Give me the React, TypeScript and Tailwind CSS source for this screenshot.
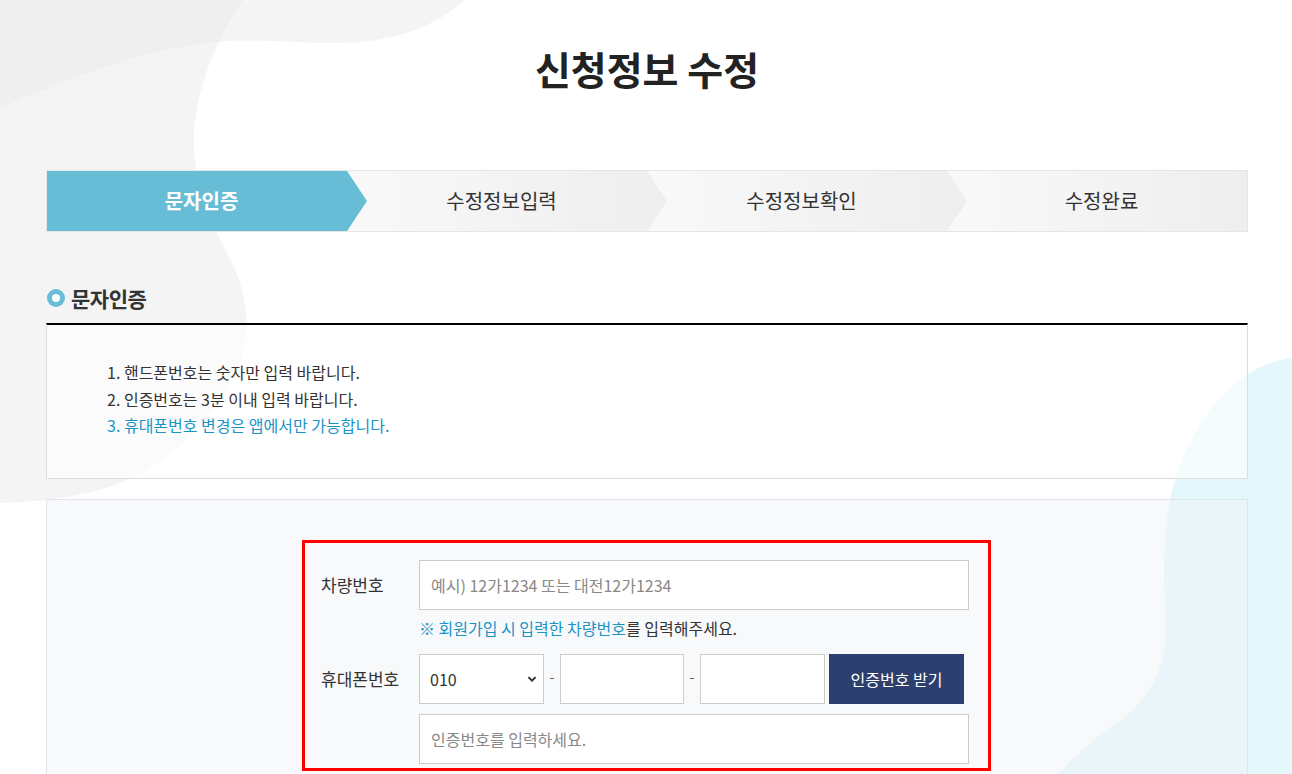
import React from "react";

const font = { fontFamily: '"Noto Sans CJK KR", "Noto Sans", sans-serif' };

function Background() {
  return (
    <svg
      className="absolute inset-0 w-[1292px] h-[774px] pointer-events-none"
      width="1292"
      height="774"
      viewBox="0 0 1292 774"
      aria-hidden="true"
    >
      <defs>
        <clipPath id="clipB">
          <path d="M0,0 L243,0 C225,28 213,50 204,80 C196,105 193,130 194,150 C196,190 215,230 235,270 C248,300 250,330 240,360 C225,410 170,470 100,490 C60,500 30,502 0,503 Z" />
        </clipPath>
      </defs>
      <path
        fill="#f4f4f4"
        d="M0,0 L243,0 C225,28 213,50 204,80 C196,105 193,130 194,150 C196,190 215,230 235,270 C248,300 250,330 240,360 C225,410 170,470 100,490 C60,500 30,502 0,503 Z"
      />
      <path
        fill="#f4f4f4"
        d="M0,0 L465,0 C430,30 390,43 333,43 C290,43 260,38 215,42 C140,50 70,78 0,108 Z"
      />
      <path
        fill="#efefef"
        clipPath="url(#clipB)"
        d="M0,0 L465,0 C430,30 390,43 333,43 C290,43 260,38 215,42 C140,50 70,78 0,108 Z"
      />
      <path
        fill="#e4f7fa"
        d="M1292,358 C1230,365 1185,430 1170,500 C1160,550 1166,600 1165,640 C1162,690 1130,715 1100,735 C1085,748 1070,760 1058,774 L1292,774 Z"
      />
    </svg>
  );
}

function Steps() {
  const steps = ["문자인증", "수정정보입력", "수정정보확인", "수정완료"];
  return (
    <div className="flex h-[62px] border border-[#e6e6e6]">
      {steps.map((s, i) => {
        const last = i === steps.length - 1;
        const active = i === 0;
        const z = ["z-40", "z-30", "z-20", "z-10"][i];
        return (
          <div
            key={s}
            className={
              (last
                ? "w-[300px] "
                : "w-[320px] -mr-[20px] [clip-path:polygon(0_0,300px_0,320px_50%,300px_100%,0_100%)] ") +
              "relative h-full shrink-0 " +
              z +
              " " +
              (active
                ? "bg-[#67bcd6]"
                : "bg-linear-to-r from-[#f9f9f9] to-[#eeeeee]")
            }
          >
            <div
              className={
                "w-[300px] h-full flex items-center justify-center pl-[9px] text-[20px] " +
                (active ? "text-white font-bold" : "text-[#333]")
              }
            >
              {s}
            </div>
          </div>
        );
      })}
    </div>
  );
}

function Chevron() {
  return (
    <svg
      className="absolute right-[7px] top-1/2 -translate-y-1/2"
      width="10"
      height="7"
      viewBox="0 0 10 7"
    >
      <path d="M1.4 1.6 L5 5.1 L8.6 1.6" fill="none" stroke="#333" strokeWidth="2" />
    </svg>
  );
}

export default function App() {
  return (
    <div className="relative h-[774px] w-full overflow-hidden bg-white" style={font}>
      <Background />
      <div className="relative ml-[46px] w-[1202px]">
        <h1 className="pt-[40px] h-[96px] leading-[56px] text-center text-[39px] font-bold text-[#222]">
          신청정보 수정
        </h1>
        <div className="mt-[74px]">
          <Steps />
        </div>

        <div className="mt-[54px] flex items-center h-[24px] pl-[1px]">
          <span className="inline-block w-[18px] h-[18px] rounded-full border-[5px] border-[#67bcd6] bg-white" />
          <span className="ml-[6px] text-[21px] font-bold text-[#333] tracking-[-0.5px] leading-[24px]">
            문자인증
          </span>
        </div>

        <div className="mt-[13px] border-t-2 border-t-black border-x border-b border-x-[#dddddd] border-b-[#dddddd] bg-white/60 pt-[34px] pb-[39px] pl-[60px] text-[16px] leading-[26.5px] text-[#333]">
          <p>1. 핸드폰번호는 숫자만 입력 바랍니다.</p>
          <p>2. 인증번호는 3분 이내 입력 바랍니다.</p>
          <p className="text-[#1a93c6]">3. 휴대폰번호 변경은 앱에서만 가능합니다.</p>
        </div>

        <div className="mt-[20px] border border-[#dfe5ea] bg-[#f0f4f8]/50 pt-[40px] h-[320px]">
          <div className="ml-[255px] w-[689px] border-[3px] border-[#ff0000] pt-[17px] pl-[16px] pr-[18px] pb-[4px]">
            <div className="flex items-center">
              <div className="w-[98px] text-[17px] text-[#333]">차량번호</div>
              <input
                className="w-[550px] h-[50px] border border-[#cccccc] bg-white px-[11px] text-[16px] text-[#333] placeholder:text-[#888] outline-none"
                placeholder="예시) 12가1234 또는 대전12가1234"
              />
            </div>
            <div className="ml-[98px] mt-[8px] leading-[20px] text-[16px] text-[#333]">
              <span className="text-[#1a93c6]">※ 회원가입 시 입력한 차량번호</span>를 입력해주세요.
            </div>
            <div className="flex items-center mt-[16px]">
              <div className="w-[98px] text-[17px] text-[#333]">휴대폰번호</div>
              <div className="relative w-[125px] h-[50px]">
                <select className="appearance-none w-full h-full border border-[#cccccc] bg-white pl-[10px] text-[16px] text-[#333] outline-none">
                  <option>010</option>
                </select>
                <Chevron />
              </div>
              <span className="w-[16px] text-center text-[14px] text-[#555] -mt-[4px]">-</span>
              <input className="w-[124px] h-[50px] border border-[#cccccc] bg-white outline-none" />
              <span className="w-[16px] text-center text-[14px] text-[#555] -mt-[4px]">-</span>
              <input className="w-[125px] h-[50px] border border-[#cccccc] bg-white outline-none" />
              <button className="ml-[4px] w-[135px] h-[50px] bg-[#2c3f6e] text-white text-[16px]">
                인증번호 받기
              </button>
            </div>
            <div className="flex mt-[10px]">
              <div className="w-[98px]" />
              <input
                className="w-[550px] h-[50px] border border-[#cccccc] bg-white px-[11px] text-[16px] text-[#333] placeholder:text-[#888] outline-none"
                placeholder="인증번호를 입력하세요."
              />
            </div>
          </div>
        </div>
      </div>
    </div>
  );
}
